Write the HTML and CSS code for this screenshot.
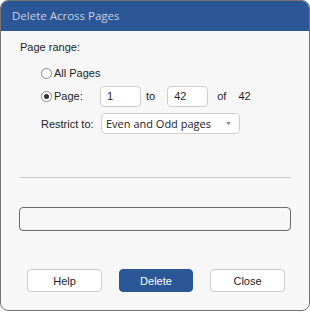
FILE: index.html
```html
<!DOCTYPE html>
<html lang="en">
<head>
    <meta charset="UTF-8">
    <title>Delete Across Pages</title>
    <link rel="stylesheet" href="styles.css">
</head>
<body>
    <div class="dialog">
        <div class="titlebar">Delete Across Pages</div>

        <div class="content">
            <div class="group-label">Page range:</div>

            <div class="range">
                <div class="radio-row">
                    <span class="radio"></span>
                    <span>All Pages</span>
                </div>
                <div class="radio-row">
                    <span class="radio checked"></span>
                    <span class="page-label">Page:</span>
                    <input class="num-box" type="text" value="1">
                    <span class="to">to</span>
                    <input class="num-box" type="text" value="42">
                    <span class="of">of</span>
                    <span>42</span>
                </div>
            </div>

            <div class="restrict">
                <span class="restrict-label">Restrict to:</span>
                <div class="select">
                    <span>Even and Odd pages</span>
                    <svg width="5" height="3" viewBox="0 0 5 3"><path d="M0 0h5L2.5 3z" fill="#8a8a8a"/></svg>
                </div>
            </div>

            <div class="separator"></div>

            <div class="progress"></div>

            <div class="buttons">
                <button class="btn">Help</button>
                <button class="btn primary">Delete</button>
                <button class="btn">Close</button>
            </div>
        </div>
    </div>
</body>
</html>
```

FILE: styles.css
```css
* {
    margin: 0;
    padding: 0;
    box-sizing: border-box;
}

body {
    background: #fff;
    font-family: "Liberation Sans", Arial, sans-serif;
    font-size: 11px;
    color: #1e1e1e;
}

.dialog {
    width: 310px;
    height: 311px;
    border: 1px solid #747474;
    border-radius: 8px;
    background: #f7f7f7;
    overflow: hidden;
}

.titlebar {
    height: 30px;
    background: #2b5797;
    color: #c8d2e4;
    font-family: "Open Sans", sans-serif;
    font-size: 11.5px;
    line-height: 30px;
    padding-left: 11px;
}

.content {
    padding: 9px 18px 0 18px;
}

.group-label {
    line-height: 14px;
    padding-left: 1px;
}

.range {
    padding-left: 22px;
    margin-top: 9px;
}

.radio-row {
    display: flex;
    align-items: center;
    height: 20px;
    margin-bottom: 3px;
}

.radio {
    width: 11px;
    height: 11px;
    border: 1px solid #8a8a8a;
    border-radius: 50%;
    background: #fff;
    margin-right: 2px;
    display: flex;
    align-items: center;
    justify-content: center;
}

.radio.checked::after {
    content: "";
    width: 5px;
    height: 5px;
    border-radius: 50%;
    background: #333;
}

.page-label {
    width: 46px;
}

.num-box {
    width: 41px;
    height: 21px;
    border: 1px solid #cfcfcf;
    border-radius: 4px;
    background: #fff;
    font-family: "Liberation Sans", Arial, sans-serif;
    font-size: 11px;
    color: #1e1e1e;
    padding-left: 6px;
    outline: none;
}

.to {
    margin: 0 12px 0 5px;
}

.of {
    margin: 0 12px 0 9px;
}

.restrict {
    display: flex;
    align-items: center;
    padding-left: 22px;
    margin-top: 7px;
}

.restrict-label {
    width: 60px;
}

.select {
    width: 139px;
    height: 21px;
    border: 1px solid #cfcfcf;
    border-radius: 4px;
    background: #fff;
    display: flex;
    align-items: center;
    justify-content: space-between;
    padding: 0 8px 0 4px;
    font-family: "Open Sans", sans-serif;
    font-size: 11px;
    color: #222;
}

.separator {
    height: 1px;
    background: #c9c9c9;
    margin-top: 43px;
    margin-left: 1px;
}

.progress {
    height: 24px;
    border: 1px solid #6a6a6a;
    border-radius: 4px;
    margin-top: 29px;
}

.buttons {
    display: flex;
    justify-content: space-between;
    padding: 0 6px 0 8px;
    margin-top: 38px;
}

.btn {
    width: 75px;
    height: 23px;
    border: 1px solid #cdcdcd;
    border-radius: 4px;
    background: #fff;
    font-family: "Liberation Sans", Arial, sans-serif;
    font-size: 11px;
    color: #1e1e1e;
}

.btn.primary {
    width: 74px;
    background: #2b5797;
    border-color: #2b5797;
    color: #fff;
}
```
